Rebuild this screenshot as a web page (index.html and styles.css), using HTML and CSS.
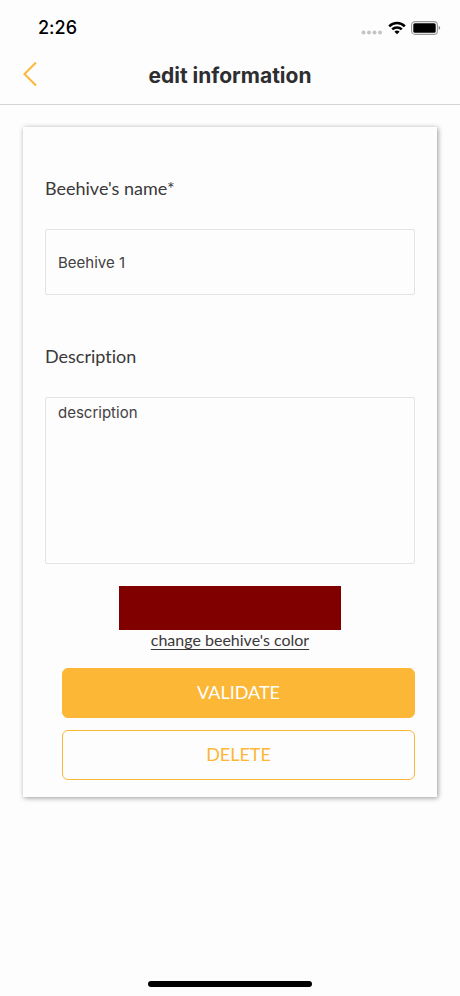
FILE: index.html
```html
<!DOCTYPE html>
<html lang="en">
<head>
<meta charset="utf-8">
<meta name="viewport" content="width=device-width, initial-scale=1">
<title>edit information</title>
<link rel="stylesheet" href="styles.css">
</head>
<body>
<div class="status-bar">
  <time class="clock">2:26</time>
  <div class="indicators">
    <svg class="signal" width="22" height="14" viewBox="0 0 22 14" aria-hidden="true">
      <circle cx="2.5" cy="11.5" r="2"/><circle cx="8" cy="11.5" r="2"/><circle cx="13.5" cy="11.5" r="2"/><circle cx="19" cy="11.5" r="2"/>
    </svg>
    <svg class="wifi" width="18" height="14" viewBox="0 0 18 14" aria-hidden="true">
      <path class="wifi-arc" d="M1.2 5.3C5.5.9 12.5.9 16.8 5.3M4.2 8.4c2.7-2.7 6.9-2.7 9.6 0"/>
      <path d="M9 13.2 6.4 10.7q2.6-2.2 5.2 0Z"/>
    </svg>
    <svg class="battery" width="30" height="14" viewBox="0 0 30 14" aria-hidden="true">
      <rect class="battery-case" x=".6" y=".6" width="25.8" height="12.8" rx="3.4"/>
      <rect x="2.3" y="2.2" width="22.4" height="9.6" rx="1.6"/>
      <path class="battery-tip" d="M27.7 4.8q3 2.2 0 4.4Z"/>
    </svg>
  </div>
</div>
<header class="nav-bar">
  <button class="back" type="button" aria-label="Back">
    <svg width="14" height="26" viewBox="0 0 14 26" aria-hidden="true"><path d="M13 1.5 1.5 13 13 24.5"/></svg>
  </button>
  <h1 class="title">edit information</h1>
</header>
<main class="content">
  <form class="card">
    <div class="field">
      <label class="label" for="name">Beehive's name*</label>
      <input class="control" id="name" type="text" value="Beehive 1">
    </div>
    <div class="field">
      <label class="label" for="description">Description</label>
      <textarea class="control area" id="description">description</textarea>
    </div>
    <div class="color-picker">
      <div class="swatch"></div>
      <a class="color-link" href="#">change beehive's color</a>
    </div>
    <div class="actions">
      <button class="button primary" type="submit">VALIDATE</button>
      <button class="button" type="button">DELETE</button>
    </div>
  </form>
</main>
<div class="home-indicator"></div>
</body>
</html>
```

FILE: styles.css
```css
* {
  box-sizing: border-box;
}

body {
  display: flex;
  flex-direction: column;
  min-height: 100vh;
  margin: 0;
  background: #fdfdfd;
  color: #3b3839;
  font-family: Lato, sans-serif;
  font-variant-ligatures: none;
}

.status-bar {
  display: flex;
  align-items: center;
  justify-content: space-between;
  height: 56px;
  padding: 0 19px 0 38px;
  color: #000;
}

.clock {
  font-family: Inter, sans-serif;
  font-size: 18px;
  font-weight: 500;
  line-height: 24px;
}

.indicators {
  display: flex;
  gap: 5px;
}

.signal {
  fill: #c4c4c4;
}

.wifi-arc {
  fill: none;
  stroke: #000;
  stroke-width: 2.5;
}

.battery-case {
  fill: none;
  stroke: #999;
  stroke-width: 1.1;
}

.battery-tip {
  fill: #888;
}

.nav-bar {
  display: grid;
  grid-template-columns: 46px 1fr 46px;
  align-items: center;
  height: 49px;
  padding-bottom: 8px;
  border-bottom: 1px solid #d6d6d6;
}

.back {
  display: flex;
  justify-content: flex-end;
  padding: 0 9px 4px 0;
  border: 0;
  background: none;
}

.back path {
  fill: none;
  stroke: #fcb737;
  stroke-width: 2;
}

.title {
  margin: 0;
  color: #2e2e30;
  text-align: center;
  font-family: Inter, sans-serif;
  font-size: 21px;
  font-weight: 700;
  line-height: 28px;
}

.content {
  flex: 1;
  padding: 22px 23px;
}

.card {
  padding: 49px 22px 17px;
  background: #fdfdfd;
  box-shadow: 1px 1px 5px rgba(0, 0, 0, 0.4);
}

.field {
  display: flex;
  flex-direction: column;
  gap: 29px;
  margin-bottom: 49px;
}

.label {
  font-size: 18px;
  line-height: 24px;
}

.control {
  width: 100%;
  height: 66px;
  padding: 0 12px;
  border: 1px solid #e4e4e4;
  border-radius: 2px;
  background: none;
  color: #444142;
  font-family: Inter, sans-serif;
  font-size: 15px;
  line-height: 20px;
}

.area {
  height: 167px;
  padding: 5px 12px;
  resize: none;
}

.color-picker {
  display: flex;
  flex-direction: column;
  align-items: center;
  margin-top: -27px;
}

.swatch {
  width: 60%;
  height: 44px;
  background: #800000;
}

.color-link {
  color: inherit;
  font-size: 16px;
  line-height: 20px;
  text-decoration-thickness: 1px;
  text-underline-offset: 3px;
}

.actions {
  display: flex;
  flex-direction: column;
  gap: 12px;
  margin-top: 18px;
  padding-left: 17px;
}

.button {
  height: 50px;
  padding: 0 0 2px;
  border: 1px solid #fcb737;
  border-radius: 6px;
  background: none;
  color: #fcb737;
  font-family: Lato, sans-serif;
  font-size: 18px;
  line-height: 24px;
}

.primary {
  background: #fcb737;
  color: #fff;
}

.home-indicator {
  align-self: center;
  width: 164px;
  height: 6px;
  margin-bottom: 9px;
  border-radius: 3px;
  background: #000;
}
```
